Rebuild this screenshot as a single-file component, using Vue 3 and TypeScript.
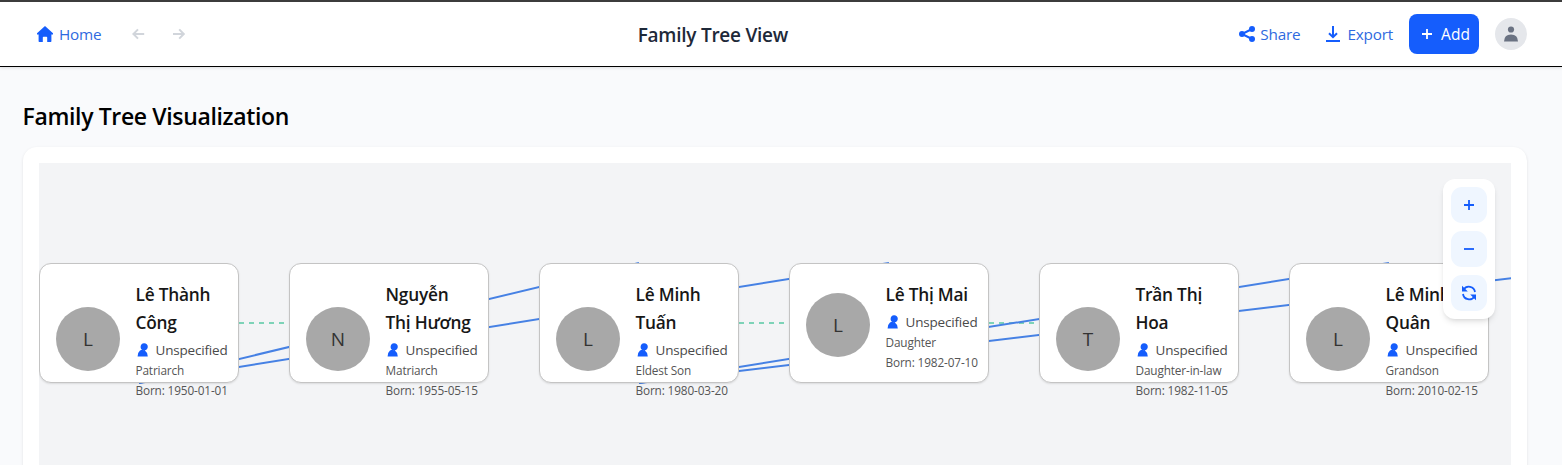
<script setup lang="ts">
interface Person {
  initial: string
  name: string[]
  role: string
  born: string
}

const people: Person[] = [
  { initial: 'L', name: ['Lê Thành', 'Công'], role: 'Patriarch', born: '1950-01-01' },
  { initial: 'N', name: ['Nguyễn', 'Thị Hương'], role: 'Matriarch', born: '1955-05-15' },
  { initial: 'L', name: ['Lê Minh', 'Tuấn'], role: 'Eldest Son', born: '1980-03-20' },
  { initial: 'L', name: ['Lê Thị Mai'], role: 'Daughter', born: '1982-07-10' },
  { initial: 'T', name: ['Trần Thị', 'Hoa'], role: 'Daughter-in-law', born: '1982-11-05' },
  { initial: 'L', name: ['Lê Minh', 'Quân'], role: 'Grandson', born: '2010-02-15' },
]

const descents = [
  [0, 2],
  [0, 3],
  [2, 5],
  [2, 6],
].map(([parent, child]) => ({ x1: parent * 250 + 100, x2: child * 250 + 100 }))

const marriages = [
  [0, 1],
  [2, 4],
].map(([a, b]) => ({ x1: a * 250 + 200, x2: b * 250 }))
</script>

<template>
  <div class="page">
    <header class="bar">
      <div class="side">
        <a class="link home">
          <svg width="16" height="16" viewBox="0 0 16 16" fill="currentColor">
            <path d="M8 0 16 7.3V8.4h-1.6V15.3q0 .7-.7.7H10.2V11.5q0-.7-.7-.7h-3q-.7 0-.7.7V16H2.3q-.7 0-.7-.7V8.4H0V7.3Z" />
          </svg>
          <span>Home</span>
        </a>
        <svg class="arrow" width="14" height="12" viewBox="0 0 14 12"><path d="M12.2 6H1.6M6 1.4 1.4 6 6 10.6" /></svg>
        <svg class="arrow next" width="14" height="12" viewBox="0 0 14 12"><path d="M1 6h10.6M7.2 1.4 11.8 6l-4.6 4.6" /></svg>
      </div>
      <h1>Family Tree View</h1>
      <div class="side right">
        <a class="link share">
          <svg width="16" height="16" viewBox="0 0 16 16">
            <path d="M13 3 3 8l10 5" fill="none" stroke="currentColor" stroke-width="2" />
            <g fill="currentColor"><circle cx="13" cy="3" r="3" /><circle cx="3" cy="8" r="3" /><circle cx="13" cy="13" r="3" /></g>
          </svg>
          <span>Share</span>
        </a>
        <a class="link export">
          <svg width="14" height="16" viewBox="0 0 14 16" fill="none" stroke="currentColor" stroke-width="2">
            <path d="M7 0v11M3 7.2l4 4 4-4M0 15h14" />
          </svg>
          <span>Export</span>
        </a>
        <button class="add">
          <svg width="10" height="10" viewBox="0 0 10 10"><path d="M5 0v10M0 5h10" /></svg>
          <span>Add</span>
        </button>
        <div class="user">
          <svg width="14" height="16" viewBox="0 0 14 16" fill="currentColor">
            <circle cx="7" cy="3.5" r="3.1" /><path d="M0 15.4Q.2 8.6 7 8.5q6.8.1 7 6.9Z" />
          </svg>
        </div>
      </div>
    </header>
    <main>
      <h2>Family Tree Visualization</h2>
      <section class="panel">
        <div class="canvas">
          <svg class="edges" width="1472" height="302">
            <line v-for="(l, i) in marriages" :key="'m' + i" class="marriage" :x1="l.x1" :x2="l.x2" y1="160" y2="160" />
            <line v-for="(l, i) in descents" :key="'d' + i" class="descent" :x1="l.x1" :x2="l.x2" y1="220" y2="100" />
          </svg>
          <div class="people">
            <article v-for="p in people" :key="p.born" class="card">
              <div class="avatar">{{ p.initial }}</div>
              <div class="info">
                <h3><span v-for="line in p.name" :key="line">{{ line }}</span></h3>
                <div class="gender">
                  <svg width="16" height="16" viewBox="0 0 16 16" fill="currentColor">
                    <path d="M8 1.2a3.6 3.6 0 1 1-.6 7.1A3.6 3.6 0 0 1 8 1.2M5.8 7.7 4 8.5Q1.7 10.4 1.6 14.4h10.2q-.2-4-3-5.8Z" />
                  </svg>
                  <span>Unspecified</span>
                </div>
                <p>{{ p.role }}</p>
                <p>Born: {{ p.born }}</p>
              </div>
            </article>
          </div>
          <div class="tools">
            <button><svg width="16" height="16" viewBox="0 0 16 16"><path d="M3 8h10M8 3v10" /></svg></button>
            <button><svg width="16" height="16" viewBox="0 0 16 16"><path d="M3 8h10" /></svg></button>
            <button>
              <svg width="16" height="16" viewBox="0 0 16 16">
                <path d="M2.6 4.6A6.2 6.2 0 0 1 14 7M13.4 11.4A6.2 6.2 0 0 1 2 9" />
                <path class="tip" d="M1 .8v5.8h5.8ZM15 15.2V9.4H9.2Z" />
              </svg>
            </button>
          </div>
        </div>
      </section>
    </main>
  </div>
</template>

<style>
html, body { margin: 0; overflow: hidden; }
</style>

<style scoped>
.page { box-sizing: border-box; height: 465px; overflow: hidden; background: #f9fafc; border-top: 2px solid #3c3c3c; font-family: "Open Sans", "Noto Sans", sans-serif; color: #000; }
h1, h2, h3, p { margin: 0; white-space: nowrap; }
svg { display: block; flex: none; }
button { border: 0; padding: 0; font: inherit; display: flex; align-items: center; justify-content: center; }
.bar { box-sizing: border-box; height: 65px; display: flex; align-items: center; justify-content: space-between; padding: 0 35px 0 37px; background: #fff; border-bottom: 1px solid #000; box-shadow: 0 1px 3px rgba(0,0,0,.12); }
.side { display: flex; align-items: center; }
h1 { font-size: 19px; font-weight: 600; line-height: 28px; color: #1e2939; letter-spacing: -.25px; padding-top: 2px; }
.link { display: flex; align-items: center; gap: 5px; font-size: 15.3px; line-height: 24px; color: #155dfc; letter-spacing: -.2px; }
.link span { color: #2f6ae0; }
.home { gap: 6px; }
.arrow { fill: none; stroke: #d1d5db; stroke-width: 2; margin-left: 31px; }
.next { margin-left: 26px; }
.export { margin-left: 26px; gap: 7px; }
.add { box-sizing: border-box; width: 70px; height: 40px; border-radius: 8px; margin-left: 16px; gap: 9px; background: #155dfc; color: #fff; font-size: 15.5px; font-weight: 500; padding-left: 4px; }
.add svg { fill: none; stroke: #fff; stroke-width: 1.8; }
.user { width: 32px; height: 32px; border-radius: 50%; margin-left: 16px; background: #e5e7eb; color: #6a7282; display: flex; align-items: center; justify-content: center; }
main { padding: 33px 35px 0 23px; }
h2 { font-size: 23px; line-height: 32px; font-weight: 600; letter-spacing: -.36px; margin-left: -.4px; }
.panel { margin-top: 15px; padding: 16px; height: 340px; border-radius: 14px; background: #fff; box-shadow: 0 1px 3px rgba(0,0,0,.1); }
.canvas { position: relative; height: 320px; overflow: hidden; background: #f3f4f6; }
.edges { position: absolute; left: 0; top: 0; }
.descent { stroke: #4681e4; stroke-width: 2; }
.marriage { stroke: #7dd3b8; stroke-width: 2; stroke-dasharray: 5 5; }
.people { position: relative; display: flex; gap: 50px; padding-top: 100px; }
.card { box-sizing: border-box; flex: none; width: 200px; height: 120px; padding: 16px; border: 1px solid #c4c4c4; border-radius: 12px; background: #fff; display: flex; align-items: flex-start; gap: 15.5px; box-shadow: 0 1px 2px rgba(0,0,0,.1); }
.avatar { flex: none; width: 64px; height: 64px; border-radius: 50%; background: #a8a8a8; color: #333; font-size: 19px; line-height: 65px; text-align: center; margin-top: 27px; }
.card:nth-child(4) .avatar { margin-top: 13px; }
.info { width: 86px; flex: none; padding-top: 1px; }
h3 { font-size: 17.3px; line-height: 28px; font-weight: 600; color: #171717; letter-spacing: -.22px; }
h3 span { display: block; }
.gender { display: flex; align-items: center; gap: 4px; height: 20px; margin: 3px 0 0; font-size: 13.5px; color: #4a4a4a; letter-spacing: -.18px; }
.gender svg { color: #155dfc; }
p { font-size: 11.8px; line-height: 20px; color: #555; letter-spacing: -.14px; }
.tools { position: absolute; right: 16px; top: 16px; display: flex; flex-direction: column; gap: 8px; padding: 8px; border-radius: 12px; background: #fff; box-shadow: 0 4px 6px -1px rgba(0,0,0,.1), 0 2px 4px -2px rgba(0,0,0,.1); }
.tools button { width: 36px; height: 36px; border-radius: 11px; background: #eff6ff; }
.tools svg { fill: none; stroke: #155dfc; stroke-width: 1.8; }
.tools .tip { fill: #155dfc; stroke: none; }
</style>
